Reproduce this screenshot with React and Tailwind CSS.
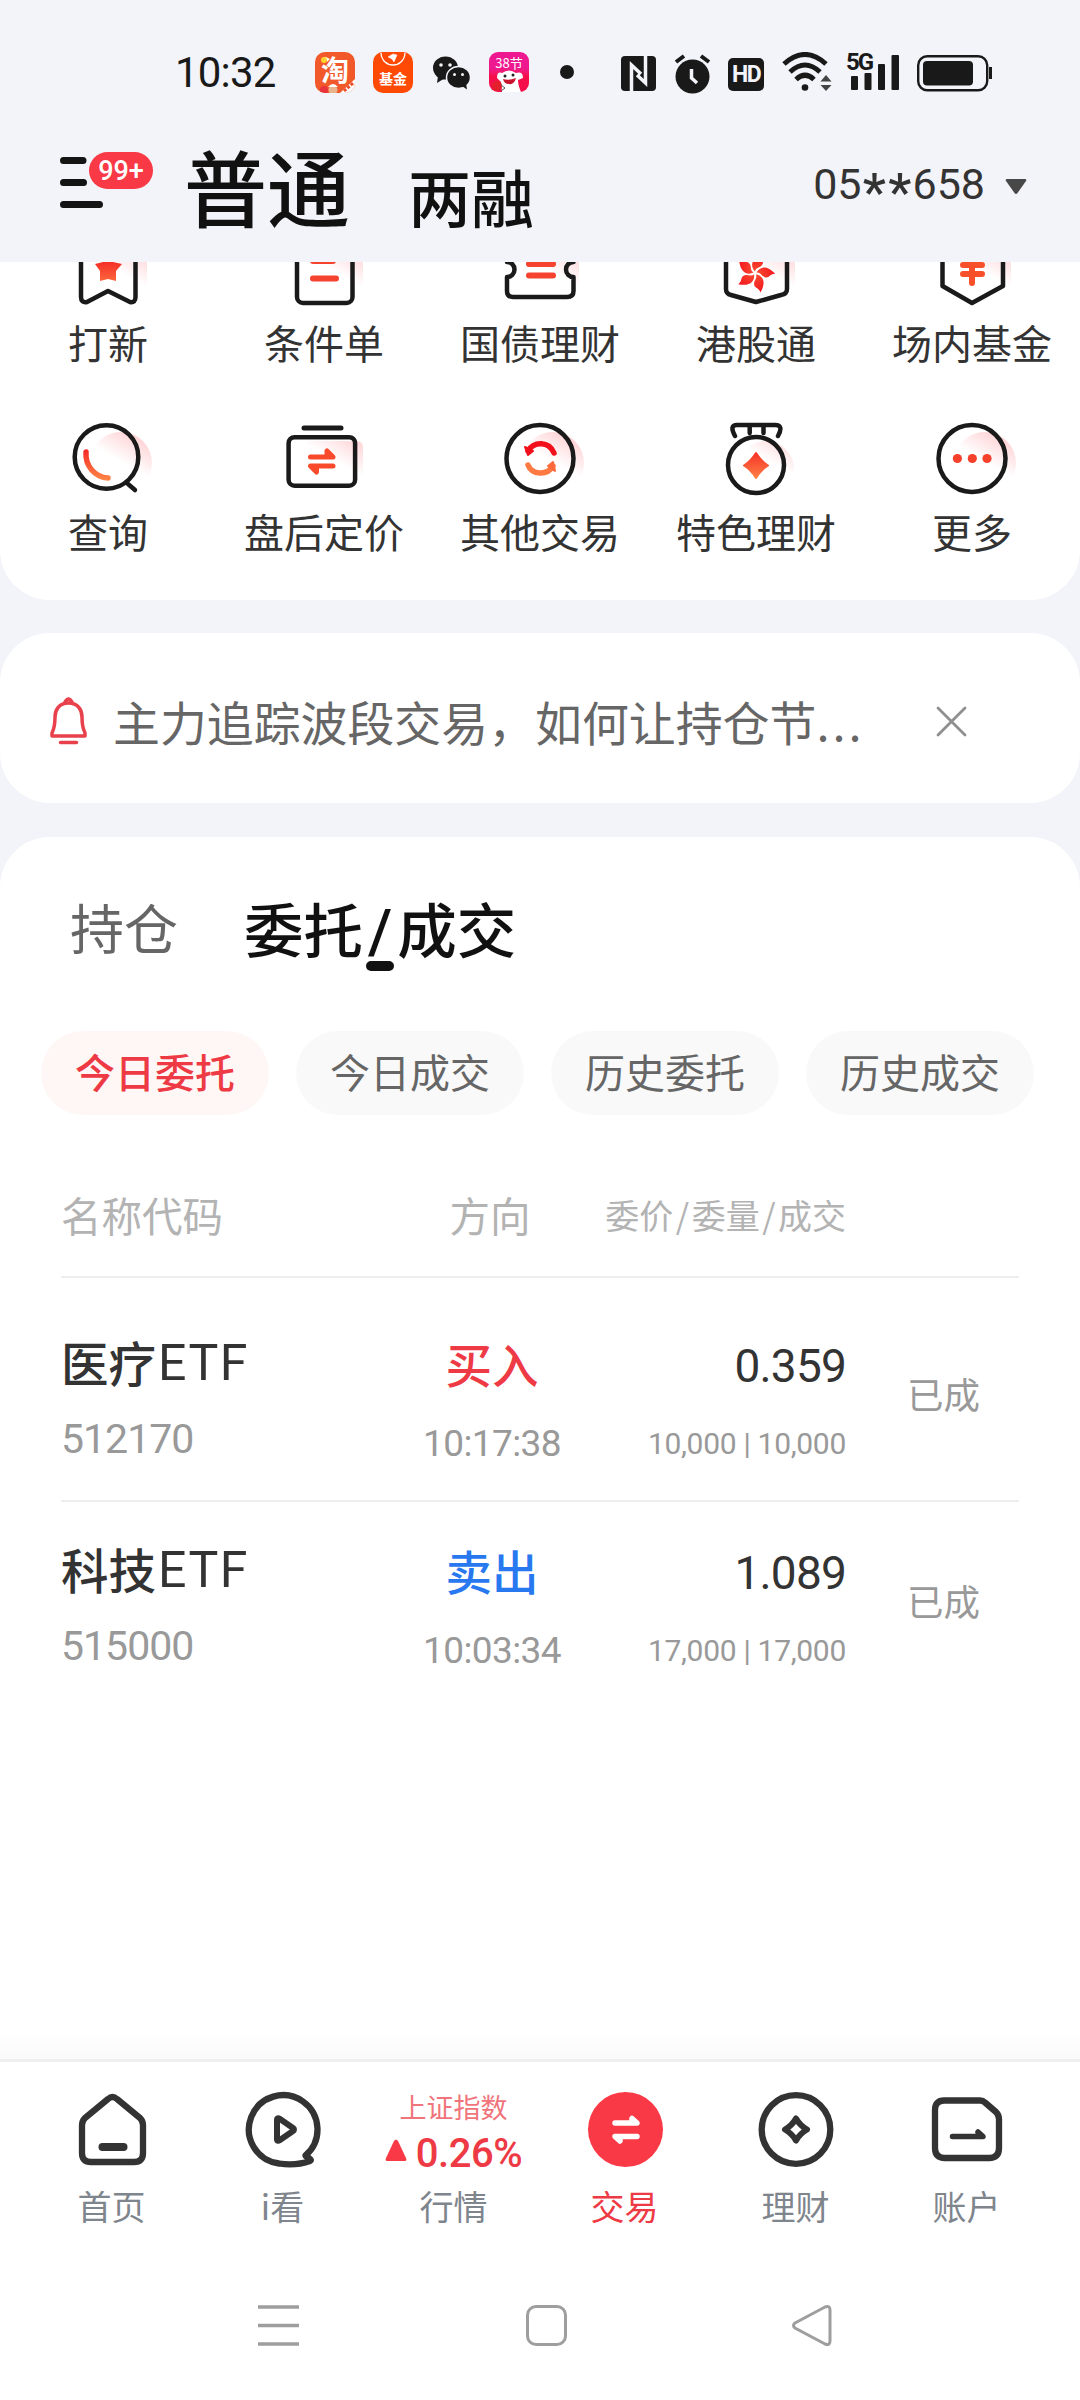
import React from "react";

const red = "#f93945";

const ServiceIcon = ({ children, shadow }) => (
  <svg width="80" height="80" viewBox="0 0 80 80" fill="none" className="overflow-visible" strokeLinecap="round" strokeLinejoin="round">
    <defs>
      <linearGradient id="warm" gradientUnits="userSpaceOnUse" x1="0" y1="22" x2="0" y2="62">
        <stop offset="0" stopColor="#f2101c" />
        <stop offset="1" stopColor="#ff8848" />
      </linearGradient>
      <linearGradient id="pink" gradientUnits="userSpaceOnUse" x1="78" y1="20" x2="62" y2="48">
        <stop offset="0" stopColor="#ffd0d3" />
        <stop offset="1" stopColor="#ffd0d3" stopOpacity="0" />
      </linearGradient>
    </defs>
    {shadow === "round" && <circle cx="53" cy="44" r="31" fill="url(#pink)" />}
    {shadow === "medal" && <circle cx="50" cy="50" r="28" fill="url(#pink)" />}
    {shadow === "box" && <rect x="20" y="22" width="59" height="44" rx="6" fill="url(#pink)" />}
    {children}
  </svg>
);

const services = [
  {
    name: "打新",
    shadow: "box",
    icon: (
      <>
        <path d="M13 10V67Q13 73 19 72L40 61L62 72Q67.500 73 67.500 67V10" stroke="#1a1a1a" strokeWidth="4.500" />
        <path d="M40 23L45 32L54 34L48 41V51L40 49L32 51V41L27 34L35 32Z" fill="url(#warm)" />
      </>
    ),
  },
  {
    name: "条件单",
    shadow: "box",
    icon: (
      <>
        <rect x="13" y="6" width="55.500" height="67" rx="6" stroke="#1a1a1a" strokeWidth="4.500" />
        <path d="M29 31H49M29 48.500H52" stroke="#f5432f" strokeWidth="6" />
      </>
    ),
  },
  {
    name: "国债理财",
    shadow: "box",
    icon: (
      <>
        <path d="M7 10V32A7 7 0 0 1 7 47V61Q7 67 13 67H67Q73.500 67 73.500 61V47A7 7 0 0 1 73.500 32V10" stroke="#1a1a1a" strokeWidth="4.500" />
        <path d="M29 34H53M29 45.500H53" stroke="#f5432f" strokeWidth="6" />
      </>
    ),
  },
  {
    name: "港股通",
    shadow: "box",
    icon: (
      <>
        <path d="M10 10V59Q10 64 15 65L40 72L65 65Q71 64 71 59V10" stroke="#1a1a1a" strokeWidth="4.500" />
        <g fill="url(#warm)">
          {[0, 72, 144, 216, 288].map((a) => (
            <path key={a} d="M39 41.500C34 36 35 29 46 24C44 29 49 31 46 35C44 38 40 37 39 41.500Z" transform={`rotate(${a} 39 43)`} />
          ))}
        </g>
      </>
    ),
  },
  {
    name: "场内基金",
    shadow: "box",
    icon: (
      <>
        <path d="M10.500 10V56L40 73L71 56V10" stroke="#1a1a1a" strokeWidth="4.500" />
        <path d="M32 22L40 31L48 22M31 35H50M31 44H50M40 32V53" stroke="#f9502c" strokeWidth="6" />
      </>
    ),
  },
  {
    name: "查询",
    shadow: "round",
    icon: (
      <>
        <circle cx="38.500" cy="38" r="31.800" stroke="#1a1a1a" strokeWidth="4.500" />
        <path d="M60 65L67 71" stroke="#1a1a1a" strokeWidth="4.500" />
        <path d="M18 33C17 47 27 58.500 40 59" stroke="url(#warm)" strokeWidth="5.500" />
      </>
    ),
  },
  {
    name: "盘后定价",
    shadow: "box",
    icon: (
      <>
        <path d="M20 9H57" stroke="#1a1a1a" strokeWidth="5" />
        <rect x="4.600" y="18.200" width="66.500" height="48.500" rx="6" stroke="#1a1a1a" strokeWidth="4.500" />
        <path d="M26.500 38H49L43 32V37M49 47H26.500L32.500 53V48" stroke="#fa4a2c" strokeWidth="5" />
      </>
    ),
  },
  {
    name: "其他交易",
    shadow: "round",
    icon: (
      <>
        <circle cx="40" cy="39.500" r="33.500" stroke="#1a1a1a" strokeWidth="4.500" />
        <path d="M28 32C34 22 49 22 54 34" stroke="#f2101c" strokeWidth="5.500" />
        <path d="M53 47C47 57 32 56 28 46" stroke="#ff7a42" strokeWidth="5.500" />
        <path d="M25 28L28 36L33 32Z" fill="#f2101c" stroke="#f2101c" strokeWidth="2" />
        <path d="M55 52L53 43L48 47Z" fill="#ff6a3c" stroke="#ff6a3c" strokeWidth="2" />
      </>
    ),
  },
  {
    name: "特色理财",
    shadow: "medal",
    icon: (
      <>
        <circle cx="40" cy="46" r="28" stroke="#1a1a1a" strokeWidth="4.500" />
        <path d="M19 17Q13 6 21 6H59Q68 6 62 17M33.700 7V14M47.500 7V14" stroke="#1a1a1a" strokeWidth="4.500" />
        <path d="M40 34Q45 42 52 46.500Q45 51 40 59Q35 51 28 46.500Q35 42 40 34Z" fill="url(#warm)" stroke="url(#warm)" strokeWidth="2" />
      </>
    ),
  },
  {
    name: "更多",
    shadow: "round",
    icon: (
      <>
        <circle cx="40" cy="39.500" r="33.500" stroke="#1a1a1a" strokeWidth="4.500" />
        <g fill="#f5402c">
          <circle cx="25.400" cy="39.500" r="4.600" />
          <circle cx="40.300" cy="39.500" r="4.600" />
          <circle cx="55" cy="39.500" r="4.600" />
        </g>
      </>
    ),
  },
];

const filters = ["今日委托", "今日成交", "历史委托", "历史成交"];

const orders = [
  { name: "医疗", code: "512170", side: "买入", time: "10:17:38", price: "0.359", amount: "10,000 | 10,000" },
  { name: "科技", code: "515000", side: "卖出", time: "10:03:34", price: "1.089", amount: "17,000 | 17,000" },
];

const StatusBar = () => (
  <div className="flex h-[96px] items-start pt-[52px] pl-[175px] text-[#191919]">
    <p className="w-[140px] font-[Roboto] text-[42px] leading-[42px] tracking-[-0.8px]">10:32</p>
    <div className="relative h-[41px] w-[40px] rounded-[10px] bg-[#f2592a] text-center text-[28px] font-bold leading-[34px] text-white">
      <span className="relative">淘</span>
      <svg className="absolute inset-0 rounded-[10px]" width="40" height="41" viewBox="0 0 40 41">
        <circle cx="9" cy="8" r="3" fill="#ffd12e" />
        <circle cx="9" cy="38" r="4" fill="#e8323c" />
        <circle cx="18" cy="38" r="4.500" fill="#e9b48c" />
        <path d="M13 35Q18 29 23 35Z" fill="#fff" />
        <path d="M25 41L40 27V41Z" fill="#fff" />
        <path d="M29 39L38 31" stroke="#e8502c" strokeWidth="3" strokeDasharray="3 1.500" />
      </svg>
    </div>
    <div className="relative ml-[18px] flex h-[41px] w-[40px] items-end justify-center rounded-[10px] bg-[#ff4a05] pb-[7px] text-[14px] font-bold leading-[15px] text-white">
      <svg className="absolute inset-0" width="40" height="41" viewBox="0 0 40 41" fill="none" stroke="#fff">
        <path d="M8 1C9 17 31 17 32 1" strokeWidth="1.300" />
        <path d="M15 5L20 2L24 3L21 10L19 7Z" fill="#fff" strokeWidth="0.500" />
      </svg>
      基金
    </div>
    <svg className="ml-[20px]" width="38" height="41" viewBox="0 0 38 41" fill="#191919">
      <ellipse cx="12.500" cy="16" rx="12.500" ry="11.500" />
      <path d="M5 24L4 31L12 26Z" />
      <ellipse cx="25.500" cy="25.500" rx="12" ry="11" stroke="#f3f4f9" strokeWidth="1.500" />
      <path d="M29 34L34 37.500L33 31Z" />
      <g fill="#f3f4f9">
        <circle cx="8" cy="13" r="1.800" />
        <circle cx="17" cy="13" r="1.800" />
        <circle cx="21.500" cy="22.500" r="1.500" />
        <circle cx="29.500" cy="22.500" r="1.500" />
      </g>
    </svg>
    <div className="relative ml-[18px] h-[40px] w-[40px] rounded-[9px] bg-gradient-to-b from-[#ee1890] from-40% to-[#f5104c] to-60% text-center text-[13px] leading-[22px] text-white">
      <span className="relative">38节</span>
      <svg className="absolute inset-0 rounded-[9px]" width="40" height="40" viewBox="0 0 40 40">
        <path d="M8 26Q8 19 13 21Q20 16 27 21Q34 19 34 26L29 28Q29 33 32 40H13L12 30Z" fill="#fff" />
        <circle cx="16" cy="24" r="1.500" fill="#222" />
        <circle cx="24" cy="23" r="1.500" fill="#222" />
        <path d="M14 27Q20 29 27 26Q25 33 20 32Q15 32 14 27Z" fill="#c8142c" />
        <circle cx="8" cy="34" r="5" fill="#e3202c" />
        <path d="M12 33L16 36L12 39" stroke="#555" fill="none" />
      </svg>
    </div>
    <div className="mt-[13px] ml-[31px] h-[14px] w-[14px] rounded-full bg-[#191919]" />

    <svg className="ml-[47px]" width="35" height="41" viewBox="0 0 35 41">
      <rect y="4" width="35" height="35" rx="4" fill="#191919" />
      <path d="M10.500 39V13L20 22M24.500 4V31L16 23" stroke="#f3f4f9" strokeWidth="3.500" fill="none" />
    </svg>
    <svg className="ml-[18px]" width="37" height="42" viewBox="0 0 37 42" fill="none">
      <circle cx="18.500" cy="24.500" r="17" fill="#191919" />
      <path d="M2 10L10 4M27 4L35 10" stroke="#191919" strokeWidth="4" />
      <path d="M17.500 17V26L23 31" stroke="#f3f4f9" strokeWidth="3.500" />
    </svg>
    <div className="mt-[6px] ml-[17px] h-[33px] w-[36px] rounded-[5px] bg-[#191919] text-center font-[Roboto] text-[23px] font-bold leading-[34px] tracking-[-1.5px] text-[#f3f4f9]">HD</div>
    <svg className="ml-[18px]" width="50" height="41" viewBox="0 0 50 41" fill="none" stroke="#191919" strokeWidth="5">
      <path d="M2 12Q23 -7 44 12M8 20Q23 6 38 20M14 27.500Q23 19 32 27.500" />
      <circle cx="23" cy="35.500" r="3.300" fill="#191919" stroke="none" />
      <path d="M38.500 29.500L44 23L49.500 29.500ZM38.500 33L44 39L49.500 33Z" fill="#444" stroke="none" />
    </svg>
    <div className="relative ml-[14px] h-[41px] w-[54px]">
      <span className="absolute top-0 left-0 font-[Roboto] text-[24px] font-bold leading-[20px] tracking-[-2px]">5G</span>
      <svg width="54" height="41" viewBox="0 0 54 41" fill="#191919">
        <rect x="5" y="24" width="7" height="14" rx="1" />
        <rect x="18.500" y="21" width="7" height="17" rx="1" />
        <rect x="32" y="12" width="7" height="26" rx="1" />
        <rect x="45.500" y="3" width="7.500" height="35" rx="1" />
      </svg>
    </div>
    <svg className="ml-[17px]" width="77" height="41" viewBox="0 0 77 41">
      <rect x="1.200" y="4.200" width="69" height="34" rx="9" fill="none" stroke="#191919" strokeWidth="2.400" />
      <rect x="6" y="9" width="50" height="24.500" rx="4" fill="#191919" />
      <path d="M73.500 15V27" stroke="#191919" strokeWidth="3" />
    </svg>
  </div>
);

const Header = () => (
  <div className="flex h-[166px] items-start">
    <div className="relative ml-[60px] mt-[56px] w-[93px]">
      <svg width="46" height="56" viewBox="0 0 46 56" stroke="#141414" strokeWidth="7" strokeLinecap="round">
        <path d="M3.500 8.500H23M3.500 30.500H23.500M3.500 52.500H39.500" />
      </svg>
      <div className="absolute top-0 left-[29px] h-[37px] w-[64px] rounded-full bg-[#f93945] text-center font-[Roboto] text-[27px] font-medium leading-[38px] text-white">99+</div>
    </div>
    <p className="ml-[31px] mt-[48px] text-[83px] font-medium leading-[82px] text-[#111]">普通</p>
    <p className="ml-[58px] mt-[68px] text-[63px] font-medium leading-[62px] text-[#111]">两融</p>
    <div className="ml-auto mr-[53px] mt-[66px] flex items-center text-[#333]">
      <p className="flex font-[Roboto] text-[43px] leading-[44px]">
        05
        <span className="mt-[9px] w-[25.500px] text-center text-[52px] font-medium">*</span>
        <span className="mt-[9px] w-[25.500px] text-center text-[52px] font-medium">*</span>
        658
      </p>
      <svg className="-mt-[4px] ml-[20px]" width="22" height="18" viewBox="0 0 22 18">
        <path d="M2 1H20Q22 1 21 3L12.500 15Q11 17 9.500 15L1 3Q0 1 2 1Z" fill="#484848" />
      </svg>
    </div>
  </div>
);

const Services = () => (
  <div className="h-[338px] overflow-hidden rounded-b-[50px] bg-white">
    <div className="-mt-[32px] grid grid-cols-5">
      {services.map((s) => (
        <div key={s.name} className="flex h-[189px] flex-col items-center">
          <ServiceIcon shadow={s.shadow}>{s.icon}</ServiceIcon>
          <p className="mt-[12px] text-[40px] leading-[40px] text-[#333]">{s.name}</p>
        </div>
      ))}
    </div>
  </div>
);

const Notice = () => (
  <div className="mt-[33px] flex h-[170px] items-center rounded-[50px] bg-white pt-[6px] pl-[50px]">
    <svg width="37" height="48" viewBox="0 0 37 48" fill="none" stroke="#e8414b" strokeWidth="3.500" strokeLinejoin="round" strokeLinecap="round">
      <path d="M15 5Q18.500 -1 22 5M18.500 6C9 6 5 13 5 20C5 29 4 32 2 36V39H35V36C33 32 32 29 32 20C32 13 28 6 18.500 6Z" />
      <path d="M10.500 45.500H26.500" />
    </svg>
    <p className="ml-[26px] w-[760px] whitespace-nowrap text-[46.900px] leading-[48px] text-[#666]">
      主力追踪波段交易，如何让持仓节<span className="tracking-[3px]">...</span>
    </p>
    <svg className="ml-[63px]" width="31" height="31" viewBox="0 0 31 31" stroke="#8f8f8f" strokeWidth="2.800" strokeLinecap="round">
      <path d="M2 2L29 29M29 2L2 29" />
    </svg>
  </div>
);

const Orders = () => (
  <div className="mt-[34px] flex-1 rounded-t-[50px] bg-white">
    <div className="flex h-[194px] items-start pt-[58px]">
      <p className="ml-[70px] mt-[2px] text-[54px] leading-[60px] text-[#666]">持仓</p>
      <div className="ml-[66px] flex flex-col items-center">
        <p className="text-[59.500px] font-medium leading-[64px] text-[#111]">
          委托<span className="mx-[5px] font-[Roboto] text-[62px] leading-[50px]">/</span>成交
        </p>
        <div className="mt-[2px] h-[10px] w-[28px] rounded-full bg-[#111]" />
      </div>
    </div>
    <div className="flex gap-[27px] px-[41px]">
      {filters.map((f, i) => (
        <div
          key={f}
          className={
            i === 0
              ? "h-[84px] w-[228px] rounded-full bg-[#fff7f6] text-center text-[40px] leading-[80px] font-medium text-[#ee3a44]"
              : "h-[84px] w-[228px] rounded-full bg-[#f9f9f9] text-center text-[40px] leading-[80px] text-[#666]"
          }
        >
          {f}
        </div>
      ))}
    </div>

    <div className="mx-[61px] mt-[16px]">
      <div className="flex h-[147px] items-center border-b-2 border-[#eee] pt-[23px] text-[40.500px] leading-[40px] text-[#b3b3b3]">
        <p className="w-[338px]">名称代码</p>
        <p className="w-[182px] text-center">方向</p>
        <p className="w-[265px] text-right text-[34px]">
          委价<span className="mx-[2.500px]">/</span>委量<span className="mx-[2.500px]">/</span>成交
        </p>
      </div>
      <div className="pt-[17px]">
        {orders.map((o, i) => (
          <div key={o.code} className={i === 0 ? "flex h-[207px] border-b-2 border-[#eee]" : "flex h-[207px]"}>
            <div className="w-[338px] pt-[43px]">
              <p className="flex h-[48px] text-[47.500px] font-medium leading-[48px] text-[#333]">
                {o.name}
                <span className="ml-[2px] font-[Roboto] text-[50px] leading-[50px] font-normal tracking-[1.5px]">ETF</span>
              </p>
              <p className="mt-[33px] font-[Roboto] text-[41px] leading-[40px] tracking-[-1px] text-[#999]">{o.code}</p>
            </div>
            <div className="w-[186px] pt-[44px] text-center">
              <p className={i === 0 ? "text-[46.500px] font-medium leading-[48px] text-[#ee3a44]" : "text-[46.500px] font-medium leading-[48px] text-[#2878f0]"}>{o.side}</p>
              <p className="mt-[38px] font-[Roboto] text-[37px] leading-[38px] tracking-[-0.6px] text-[#999]">{o.time}</p>
            </div>
            <div className="w-[261px] pt-[47px] text-right font-[Roboto]">
              <p className="text-[46px] leading-[48px] tracking-[-0.8px] text-[#333]">{o.price}</p>
              <p className="mt-[36px] text-[30px] leading-[36px] tracking-[-0.3px] text-[#999]">{o.amount}</p>
            </div>
            <p className="ml-[61px] pt-[79px] text-[36.500px] leading-[40px] text-[#999]">已成</p>
          </div>
        ))}
      </div>
    </div>
  </div>
);

const TabItem = ({ label, active, children }) => (
  <div className="flex w-[171px] flex-col items-center">
    <div className="flex h-[80px] flex-col items-center">{children}</div>
    <p className={active ? "mt-[19px] text-[34px] leading-[34px] text-[#ee3a44]" : "mt-[19px] text-[34px] leading-[34px] text-[#7f858d]"}>{label}</p>
  </div>
);

const TabIcon = ({ children }) => (
  <svg width="80" height="80" viewBox="0 0 80 80" fill="none" stroke="#333" strokeWidth="6.300" strokeLinecap="round" strokeLinejoin="round">
    {children}
  </svg>
);

const TabBar = () => (
  <div>
    <div className="h-[30px] bg-gradient-to-b from-white to-[#fafafa]" />
    <div className="flex h-[202px] border-t-[3px] border-[#efefef] bg-white px-[26px] pt-[28px]">
      <TabItem label="首页">
        <TabIcon>
          <path d="M36 9Q40.500 5 45 9L68 28Q71 31 71 35V63Q71 72 62 72H19Q10 72 10 63V35Q10 31 13 28Z" />
          <path d="M30.500 57H51.500" strokeWidth="8" />
        </TabIcon>
      </TabItem>
      <TabItem label="i看">
        <TabIcon>
          <path d="M62.500 65.500A34.300 34.300 0 1 0 36 73.500Q53 76 67 71Q69 70 66 68Q63 67 62.500 65.500Z" />
          <path d="M34 30Q34 27 37 29L50 38Q52 39.500 50 41L37 50Q34 52 34 49Z" strokeWidth="6" />
        </TabIcon>
      </TabItem>
      <TabItem label="行情">
        <p className="mt-[2px] text-[27px] leading-[30px] text-[#f0747b]">上证指数</p>
        <div className="mt-[10px] flex items-start text-[#ee3a44]">
          <svg className="mt-[7px]" width="22" height="22" viewBox="0 0 22 22">
            <path d="M9 2Q11 -1 13 2L21 19Q22 22 20 22H2Q0 22 1 19Z" fill={red} />
          </svg>
          <p className="mt-[2px] ml-[9px] font-[Roboto] text-[40px] leading-[40px] font-medium tracking-[-0.5px]">0.26%</p>
        </div>
      </TabItem>
      <TabItem label="交易" active>
        <svg width="80" height="80" viewBox="0 0 80 80" fill="none" stroke="#fff" strokeLinecap="round" strokeLinejoin="round">
          <circle cx="40.500" cy="39.500" r="37.500" fill={red} stroke="none" />
          <path d="M30 33H52L47 28.500V32M52 46.500H30L35 51V47" strokeWidth="5.500" />
        </svg>
      </TabItem>
      <TabItem label="理财">
        <TabIcon>
          <circle cx="40" cy="39.500" r="34.300" />
          <path d="M40 28.500Q44 35.500 51 39.500Q44 43.500 40 50.500Q36 43.500 29 39.500Q36 35.500 40 28.500Z" strokeWidth="6" />
        </TabIcon>
      </TabItem>
      <TabItem label="账户">
        <TabIcon>
          <path d="M17 10.500H53Q56 10.500 58 12.500L69 22Q72 25 72 29V58Q72 68 62 68H18Q8 68 8 58V20Q8 10.500 17 10.500Z" />
          <path d="M25.500 46.500H56L51 42" strokeWidth="5.500" />
        </TabIcon>
      </TabItem>
    </div>
    <div className="flex h-[139px] items-start bg-white pt-[42px] pl-[258px]">
      <svg width="41" height="44" viewBox="0 0 41 44" stroke="#9e9e9e" strokeWidth="3.500">
        <path d="M0 4H41M0 22.500H41M0 41H41" />
      </svg>
      <div className="mt-[2px] ml-[227px] h-[41px] w-[41px] rounded-[10px] border-[3px] border-[#9e9e9e]" />
      <svg className="ml-[225px]" width="41" height="44" viewBox="0 0 41 44" fill="none" stroke="#9e9e9e" strokeWidth="3">
        <path d="M3 20L33 4Q38 2 38 7V38Q38 43 33 41L3 25Q0 22.500 3 20Z" />
      </svg>
    </div>
  </div>
);

const App = () => {
  return (
    <div className="flex h-[2400px] w-[1080px] flex-col overflow-hidden bg-[#f3f4f9] font-['Noto_Sans_CJK_SC',sans-serif]">
      <StatusBar />
      <Header />
      <Services />
      <Notice />
      <Orders />
      <TabBar />
    </div>
  );
};

export default App;
